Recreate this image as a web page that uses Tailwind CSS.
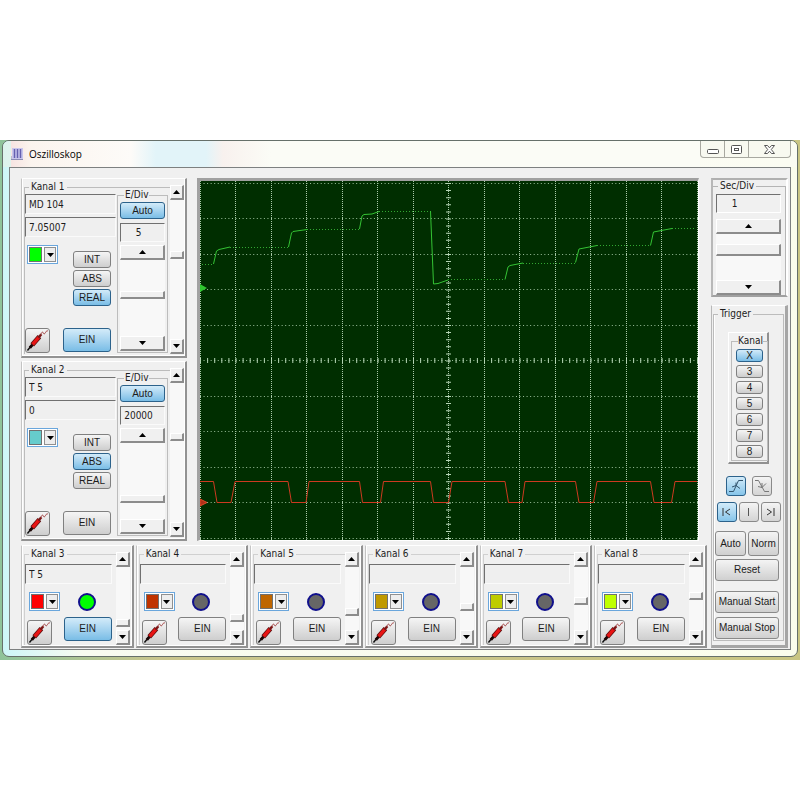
<!DOCTYPE html>
<html lang="de">

<head>
    <meta charset="UTF-8">
    <meta name="viewport" content="width=device-width, initial-scale=1.0">
    <title>Oszilloskop</title>
    <script src="https://cdn.jsdelivr.net/npm/@tailwindcss/browser@4"></script>
</head>

<body class="flex min-h-screen items-center bg-white font-['DejaVu_Sans_Condensed','DejaVu_Sans',sans-serif] text-[10px] leading-3 text-[#1c1c1c]">

    <!-- Shared icons -->
    <svg class="hidden">
        <symbol id="probe" viewBox="0 0 24 24">
            <path d="M1.500 22.500L6 17" stroke="#111" stroke-width="1.500" fill="none" />
            <path d="M4 19.500L8 15" stroke="#1a0505" stroke-width="3" fill="none" />
            <path d="M6.500 16.500L14 8" stroke="#5a1010" stroke-width="5" fill="none" />
            <path d="M7 16L13.500 8.500" stroke="#e81414" stroke-width="3.500" fill="none" />
            <path d="M13 9L16 5.500" stroke="#7a1515" stroke-width="2.500" fill="none" />
            <path d="M15.500 6C16.500 3 17.500 2.500 18 4S19.500 5.500 20.500 3.500S22 2 23 2" stroke="#a04040" stroke-width="1" fill="none" />
        </symbol>
        <symbol id="up" viewBox="0 0 7 4">
            <path d="M0 4L3.500 0L7 4Z" />
        </symbol>
        <symbol id="down" viewBox="0 0 7 4">
            <path d="M0 0L3.500 4L7 0Z" />
        </symbol>
    </svg>

    <div class="w-full bg-linear-to-r from-[#8fc39a] via-[#c9c68d] via-20% to-[#c9c583] px-0.5 pb-[3px]">
        <!-- Window -->
        <div class="rounded-[7px] border border-[#66706a] bg-linear-to-r from-[#cdf6f8] via-[#f8fbf0] via-10% to-[#fbfdec]">

            <!-- Title bar -->
            <header class="flex h-[26px] items-start rounded-t-[6px] bg-linear-to-r from-[#dcf3ec] via-[#fcfaf8] via-10% to-[#fbfcf2] pl-2">
                <div class="flex h-full flex-1 items-center bg-[linear-gradient(90deg,#f7e4e2_0,#fbf4ee_20px,#fdfbf8_120px,#e2f4f9_145px,#e2f4f9_195px,#f8f1ee_212px,#fbfcf6_260px)]">
                    <svg class="h-3 w-3" viewBox="0 0 12 12">
                        <rect x="1" width="11" height="12" fill="#c9c6ec" />
                        <path d="M3.500 1V10M6.500 1V10M9.500 1V10" stroke="#6660b0" stroke-width="1.500" />
                        <path d="M0 11.500H12M0 8V12" stroke="#8c8cb4" />
                    </svg>
                    <h1 class="ml-1.5 font-['Open_Sans',sans-serif] text-[10px] leading-4 text-black">Oszilloskop</h1>
                </div>
                <div class="mr-1.5 flex h-[17px] divide-x divide-[#a8a8a0] rounded-b-[4px] border border-t-0 border-[#a8a8a0] bg-[#f8f9f0]">
                    <button aria-label="Minimieren" class="flex w-6 items-center justify-center pt-1">
                        <svg class="h-[5px] w-3" viewBox="0 0 12 5"><rect x=".5" y=".5" width="11" height="4" rx="1" fill="#fff" stroke="#555" /></svg>
                    </button>
                    <button aria-label="Maximieren" class="flex w-6 items-center justify-center">
                        <svg class="h-[9px] w-[11px]" viewBox="0 0 11 9" fill="#fff" stroke="#555"><rect x=".5" y=".5" width="10" height="8" rx="1" /><rect x="3.500" y="3.500" width="4" height="2" /></svg>
                    </button>
                    <button aria-label="Schließen" class="flex w-[41px] items-center justify-center">
                        <svg class="h-[9px] w-[11px]" viewBox="0 0 11 9"><path d="M.5 .5H3.500L5.500 2.800L7.500 .5H10.500L7.300 4.500L10.500 8.500H7.500L5.500 6.200L3.500 8.500H.5L3.700 4.500Z" fill="#fff" stroke="#555" /></svg>
                    </button>
                </div>
            </header>

            <main class="mx-1.5 mb-1.5 flex gap-1 border border-[#7d8080] bg-[#f0f0f0] pt-2.5 pr-0.5 pb-px pl-[11px]">
                <div class="flex min-w-0 flex-1 flex-col gap-1">
                    <div class="flex gap-2.5 pr-2">
                        <!-- Kanal 1 + 2 -->
                        <div id="mainChannels" class="flex w-[166px] shrink-0 flex-col gap-[3px]"></div>

                        <!-- Screen -->
                        <div class="h-[363px] min-w-0 flex-1 border-t-3 border-r border-b border-l-3 border-t-[#a0a0a0] border-r-white border-b-white border-l-[#a0a0a0] bg-[#002e00]">
                            <svg class="h-full w-full" viewBox="0 0 498 359" preserveAspectRatio="none" fill="none">
                                <g id="grid"></g>
                                <path d="M0 103L7 107L0 111Z" fill="#2fc62f" />
                                <path d="M0 318L7 321.500L0 325Z" fill="#b03018" stroke="#e04a28" />
                                <!-- Kanal 1 -->
                                <path d="M2 83.500H13M30 66.500H88M107 48.500H159M179 30.500H230M248 98.500H305M323 82.500H375M397 64.500H450M472 47.500H494" stroke="#32a832" stroke-dasharray="1 2" />
                                <path d="M13.500 83L16.500 70L19 68.500L30 66M88.500 66L91.500 52L93 50.500L107 48.500M159.500 48L162 35L164 33.500L172 33L179 30.500M230.500 30L233.500 103L238 102.500L248 99M305 98.500L308 86L310 84.500L323 82M375.500 81.500L379 68L397 64.500M450.500 64.500L453.500 51L472 47.500" stroke="#34c334" />
                                <!-- Kanal 3 -->
                                <path d="M0 300.500H13.500L17 321.500H31L35 300.500H88L91.500 321.500H106L109 300.500H159.500L162.500 321.500H180.500L183.500 300.500H230.500L233.500 321.500H248.500L252 300.500H305L308.500 321.500H322L325 300.500H375.500L379 321.500H393.500L397 300.500H450.500L454 321.500H471.500L475 300.500H497" stroke="#cc3a20" />
                            </svg>
                        </div>
                    </div>

                    <!-- Kanal 3 - 8 -->
                    <div id="subChannels" class="grid grid-cols-6 gap-x-0.5"></div>
                </div>

                <!-- Right column -->
                <div class="flex w-[77px] shrink-0 flex-col gap-2">
                    <section class="border-2 border-t-[#b0b0b0] border-r-white border-b-[#a0a0a0] border-l-[#b8b8b8]">
                        <fieldset class="border-t border-r border-[#b4b4b4] pr-1 pl-[3px]">
                            <legend class="ml-0.5 px-0.5">Sec/Div</legend>
                            <input type="text" readonly value="1" aria-label="Sekunden pro Division" class="mt-0.5 block h-[19px] w-full border border-t-[#707070] border-r-white border-b-white border-l-[#707070] pr-7 text-center">
                            <div id="timeScroll" class="mt-1.5 h-[76px]"></div>
                        </fieldset>
                    </section>

                    <section class="flex-1 border-t border-r-3 border-b-3 border-l border-t-white border-r-[#a6a6a6] border-b-[#a6a6a6] border-l-[#b8b8b8] px-px pt-0.5 pb-1">
                        <fieldset class="h-full border border-[#bcbcbc] shadow-[inset_1px_0_white]">
                            <legend class="ml-1 px-0.5">Trigger</legend>

                            <div class="mx-auto mt-3 w-[41px] border-t border-r-2 border-b-2 border-l border-t-white border-r-[#909090] border-b-[#909090] border-l-white px-0.5 pt-0.5 pb-px">
                                <fieldset class="border border-[#bcbcbc] px-1 pb-0.5">
                                    <legend class="ml-0.5">Kanal</legend>
                                    <div id="triggerSource" class="mt-0.5 flex flex-col gap-[3px] font-['Liberation_Sans',sans-serif]"></div>
                                </fieldset>
                            </div>

                            <div class="mt-3 flex justify-center gap-1.5">
                                <button aria-label="Steigende Flanke" aria-pressed="true" class="flex size-5 items-center justify-center rounded-[3px] border border-[#2c628b] bg-linear-to-b from-[#d3ebf9] to-[#86c5ea]">
                                    <svg class="size-4" viewBox="0 0 16 16" fill="none" stroke="#33556e"><path d="M1 13.500H5.500L10.500 2.500H15M4 9L8 7.500L12 10.500M8 7.500V4.500" /></svg>
                                </button>
                                <button aria-label="Fallende Flanke" class="flex size-5 items-center justify-center rounded-[3px] border border-[#8a8a8a] bg-linear-to-b from-[#f4f4f4] to-[#d4d4d4]">
                                    <svg class="size-4" viewBox="0 0 16 16" fill="none" stroke="#777"><path d="M1 2.500H4.500L10.500 13.500H15M4 8.500L8 9.500L12 5.500M8 9.500V5" /></svg>
                                </button>
                            </div>
                            <div class="mt-1.5 flex justify-center gap-0.5">
                                <button aria-label="Anfang" aria-pressed="true" class="flex size-5 items-center justify-center rounded-[3px] border border-[#2c628b] bg-linear-to-b from-[#d3ebf9] to-[#86c5ea]">
                                    <svg class="h-2 w-[9px]" viewBox="0 0 9 8" fill="none" stroke="#333"><path d="M1 0V8M8 1L3.500 4L8 7" /></svg>
                                </button>
                                <button aria-label="Mitte" class="flex size-5 items-center justify-center rounded-[3px] border border-[#8a8a8a] bg-linear-to-b from-[#f4f4f4] to-[#d4d4d4]">
                                    <svg class="h-2 w-[9px]" viewBox="0 0 9 8" fill="none" stroke="#555"><path d="M4.500 0V8" /></svg>
                                </button>
                                <button aria-label="Ende" class="flex size-5 items-center justify-center rounded-[3px] border border-[#8a8a8a] bg-linear-to-b from-[#f4f4f4] to-[#d4d4d4]">
                                    <svg class="h-2 w-[9px]" viewBox="0 0 9 8" fill="none" stroke="#333"><path d="M8 0V8M1 1L5.500 4L1 7" /></svg>
                                </button>
                            </div>

                            <div class="mt-[9px] grid grid-cols-2 gap-x-0.5 pr-1 pl-px font-['Liberation_Sans',sans-serif]">
                                <button class="h-[25px] rounded-[3px] border border-[#8a8a8a] bg-linear-to-b from-[#f4f4f4] to-[#d0d0d0]">Auto</button>
                                <button class="h-[25px] rounded-[3px] border border-[#8a8a8a] bg-linear-to-b from-[#f4f4f4] to-[#d0d0d0]">Norm</button>
                                <button class="col-span-2 mt-[3px] h-[22px] rounded-[3px] border border-[#8a8a8a] bg-linear-to-b from-[#f4f4f4] to-[#d0d0d0]">Reset</button>
                                <button class="col-span-2 mt-2.5 h-[22px] rounded-[3px] border border-[#8a8a8a] bg-linear-to-b from-[#f4f4f4] to-[#d0d0d0] whitespace-nowrap">Manual Start</button>
                                <button class="col-span-2 mt-1 h-[22px] rounded-[3px] border border-[#8a8a8a] bg-linear-to-b from-[#f4f4f4] to-[#d0d0d0] whitespace-nowrap">Manual Stop</button>
                            </div>
                        </fieldset>
                    </section>
                </div>
            </main>
        </div>
    </div>

    <script>
        const panel = "border-t border-r-2 border-b-2 border-l border-t-white border-r-[#929292] border-b-[#929292] border-l-[#c4c4c4] shadow-[inset_-1px_-1px_white,inset_1px_0_white]";
        const field = "block w-full min-w-0 border border-t-[#707070] border-r-[#fafafa] border-b-[#fafafa] border-l-[#707070] bg-[#efefef]";
        const buttonOff = "rounded-[3px] border border-[#808080] bg-linear-to-b from-[#f5f5f5] to-[#cecece]";
        const buttonOn = "rounded-[3px] border border-[#2c628b] bg-linear-to-b from-[#d3ebf9] to-[#79bde6]";
        const arrow = "flex h-[15px] w-full shrink-0 items-center justify-center border-t border-r-2 border-b-2 border-l border-t-white border-r-[#8c8c8c] border-b-[#8c8c8c] border-l-white bg-[#f0f0f0]";
        const track = "block min-h-0 w-full flex-1 appearance-none bg-[#f8f8f8] [writing-mode:vertical-lr] [&::-webkit-slider-thumb]:appearance-none [&::-webkit-slider-thumb]:border-t [&::-webkit-slider-thumb]:border-r-2 [&::-webkit-slider-thumb]:border-b-2 [&::-webkit-slider-thumb]:border-l [&::-webkit-slider-thumb]:border-solid [&::-webkit-slider-thumb]:border-t-white [&::-webkit-slider-thumb]:border-l-white [&::-webkit-slider-thumb]:border-r-[#8c8c8c] [&::-webkit-slider-thumb]:border-b-[#8c8c8c] [&::-webkit-slider-thumb]:bg-[#f0f0f0]";
        const narrowThumb = "[&::-webkit-slider-thumb]:h-2 [&::-webkit-slider-thumb]:w-[14px]";
        const wideThumb = "[&::-webkit-slider-thumb]:h-2 [&::-webkit-slider-thumb]:w-[45px]";
        const timeThumb = "[&::-webkit-slider-thumb]:h-3 [&::-webkit-slider-thumb]:w-[65px]";

        const button = (text, on, size) =>
            `<button aria-pressed="${on}" class="${on ? buttonOn : buttonOff} ${size} font-['Liberation_Sans',sans-serif]">${text}</button>`;

        const scroller = (label, value, thumb = narrowThumb) => `
            <div class="flex h-full w-full flex-col">
                <button aria-label="${label} hoch" class="${arrow}"><svg class="h-1 w-[7px]"><use href="#up" /></svg></button>
                <input type="range" min="0" max="100" value="${value}" aria-label="${label}" class="${track} ${thumb}">
                <button aria-label="${label} runter" class="${arrow}"><svg class="h-1 w-[7px]"><use href="#down" /></svg></button>
            </div>`;

        const colorBox = (name, color) => `
            <div class="relative flex h-[19px] w-[31px] border border-[#6aa6dc] bg-white p-px">
                <span class="w-[13px] border border-[#707070]" style="background:${color}"></span>
                <span class="ml-auto flex w-3 items-center justify-center border border-[#909090] bg-[#ededed]"><svg class="h-1 w-[7px]"><use href="#down" /></svg></span>
                <select aria-label="Farbe ${name}" class="absolute inset-0 w-full opacity-0"><option>${color}</option></select>
            </div>`;

        const probe = (name) =>
            `<button aria-label="Tastkopf ${name}" class="${buttonOff} size-[25px]"><svg class="size-[23px]"><use href="#probe" /></svg></button>`;

        // channels with their own E/Div control
        const mainChannels = [
            { name: "Kanal 1", source: "MD 104", value: "7.05007", color: "#00ff00", mode: "REAL", on: true, div: "5", divPos: 45, pos: 39 },
            { name: "Kanal 2", source: "T 5", value: "0", color: "#66cccc", mode: "ABS", on: false, div: "20000", divPos: 77, pos: 38 },
        ];

        document.getElementById("mainChannels").innerHTML = mainChannels.map(c => `
            <section class="${panel} flex flex-1 py-0.5 pr-px pl-0.5">
                <fieldset class="min-w-0 flex-1 border-t border-l border-[#bcbcbc]">
                    <legend class="ml-1 px-0.5">${c.name}</legend>
                    <div class="flex">
                        <div class="flex w-[91px] flex-col">
                            <input type="text" value="${c.source}" aria-label="Quelle ${c.name}" class="${field} mt-px h-5 px-[3px]">
                            <input type="text" readonly value="${c.value}" aria-label="Wert ${c.name}" class="${field} mt-[3px] h-5 px-[3px]">
                            <div class="mt-2 flex justify-between pr-[5px] pl-0.5">
                                ${colorBox(c.name, c.color)}
                                <div class="mt-1.5 flex flex-col gap-0.5">
                                    ${["INT", "ABS", "REAL"].map(m => button(m, m === c.mode, "h-[17px] w-[38px]")).join("")}
                                </div>
                            </div>
                            <div class="mt-auto flex justify-between pr-[5px]">
                                ${probe(c.name)}
                                ${button("EIN", c.on, "h-6 w-12")}
                            </div>
                        </div>
                        <fieldset class="-mt-1 ml-px w-[51px] border border-[#bcbcbc] px-0.5 pb-px">
                            <legend class="ml-1 px-px">E/Div</legend>
                            ${button("Auto", true, "mt-px block h-[17px] w-full")}
                            <input type="text" readonly value="${c.div}" aria-label="E/Div ${c.name}" class="${field} mt-1 h-[19px] pr-2 text-center">
                            <div class="mt-[3px] h-[106px]">${scroller("E/Div " + c.name, c.divPos, wideThumb)}</div>
                        </fieldset>
                    </div>
                </fieldset>
                <div class="mt-1 w-[14px]">${scroller("Position " + c.name, c.pos)}</div>
            </section>`).join("");

        const subChannels = [
            { name: "Kanal 3", source: "T 5", color: "#ff0000", lamp: "#00ff00", on: true, pos: 94 },
            { name: "Kanal 4", source: "", color: "#bf3300", lamp: "#666666", on: false, pos: 85 },
            { name: "Kanal 5", source: "", color: "#bf6600", lamp: "#666666", on: false, pos: 75 },
            { name: "Kanal 6", source: "", color: "#bf9900", lamp: "#666666", on: false, pos: 65 },
            { name: "Kanal 7", source: "", color: "#bfcc00", lamp: "#666666", on: false, pos: 55 },
            { name: "Kanal 8", source: "", color: "#bfff00", lamp: "#666666", on: false, pos: 45 },
        ];

        document.getElementById("subChannels").innerHTML = subChannels.map(c => `
            <section class="${panel} flex pt-0.5 pr-0.5 pb-px pl-0.5">
                <fieldset class="min-w-0 flex-1 border-t border-l border-[#d0d0d0] pr-1">
                    <legend class="ml-1 px-0.5">${c.name}</legend>
                    <input type="text" value="${c.source}" aria-label="Quelle ${c.name}" class="${field} mt-1 h-5 px-[3px]">
                    <div class="mt-2 flex items-center justify-between pr-4 pl-1">
                        ${colorBox(c.name, c.color)}
                        <span class="size-[18px] rounded-full border-2 border-[#10108c]" style="background:${c.lamp}"></span>
                    </div>
                    <div class="mt-1.5 flex items-end justify-between pl-0.5">
                        ${probe(c.name)}
                        ${button("EIN", c.on, "mb-1 h-6 w-12")}
                    </div>
                </fieldset>
                <div class="mt-1 w-[14px]">${scroller("Position " + c.name, c.pos)}</div>
            </section>`).join("");

        document.getElementById("timeScroll").innerHTML = scroller("Zeitbasis", 30, timeThumb);

        document.getElementById("triggerSource").innerHTML =
            ["X", "3", "4", "5", "6", "7", "8"].map((s, i) => button(s, i === 0, "h-[13px] w-full leading-[11px]")).join("");

        // graticule: 14 x 10 divisions
        let lines = "";
        for (let i = 0; i <= 14; i++) {
            const x = Math.floor(i * 35.5) + 0.5;
            lines += `<line x1="${x}" x2="${x}" y1="0" y2="359" stroke="#a9c9a9" stroke-dasharray="1 1" />`;
        }
        for (let i = 0; i <= 10; i++) {
            const y = Math.floor(i * 35.5) + 2.5;
            lines += `<line x1="0" x2="498" y1="${y}" y2="${y}" stroke="#9cc09c" stroke-dasharray="1 2.55" />`;
        }
        lines += `<line x1="0" x2="498" y1="179.500" y2="179.500" stroke="#b4d4b4" stroke-width="5" stroke-dasharray="1 6.100" />`;
        lines += `<line x1="248.500" x2="248.500" y1="2" y2="359" stroke="#b4d4b4" stroke-width="5" stroke-dasharray="1 6.100" />`;
        document.getElementById("grid").innerHTML = lines;
    </script>

</body>

</html>
